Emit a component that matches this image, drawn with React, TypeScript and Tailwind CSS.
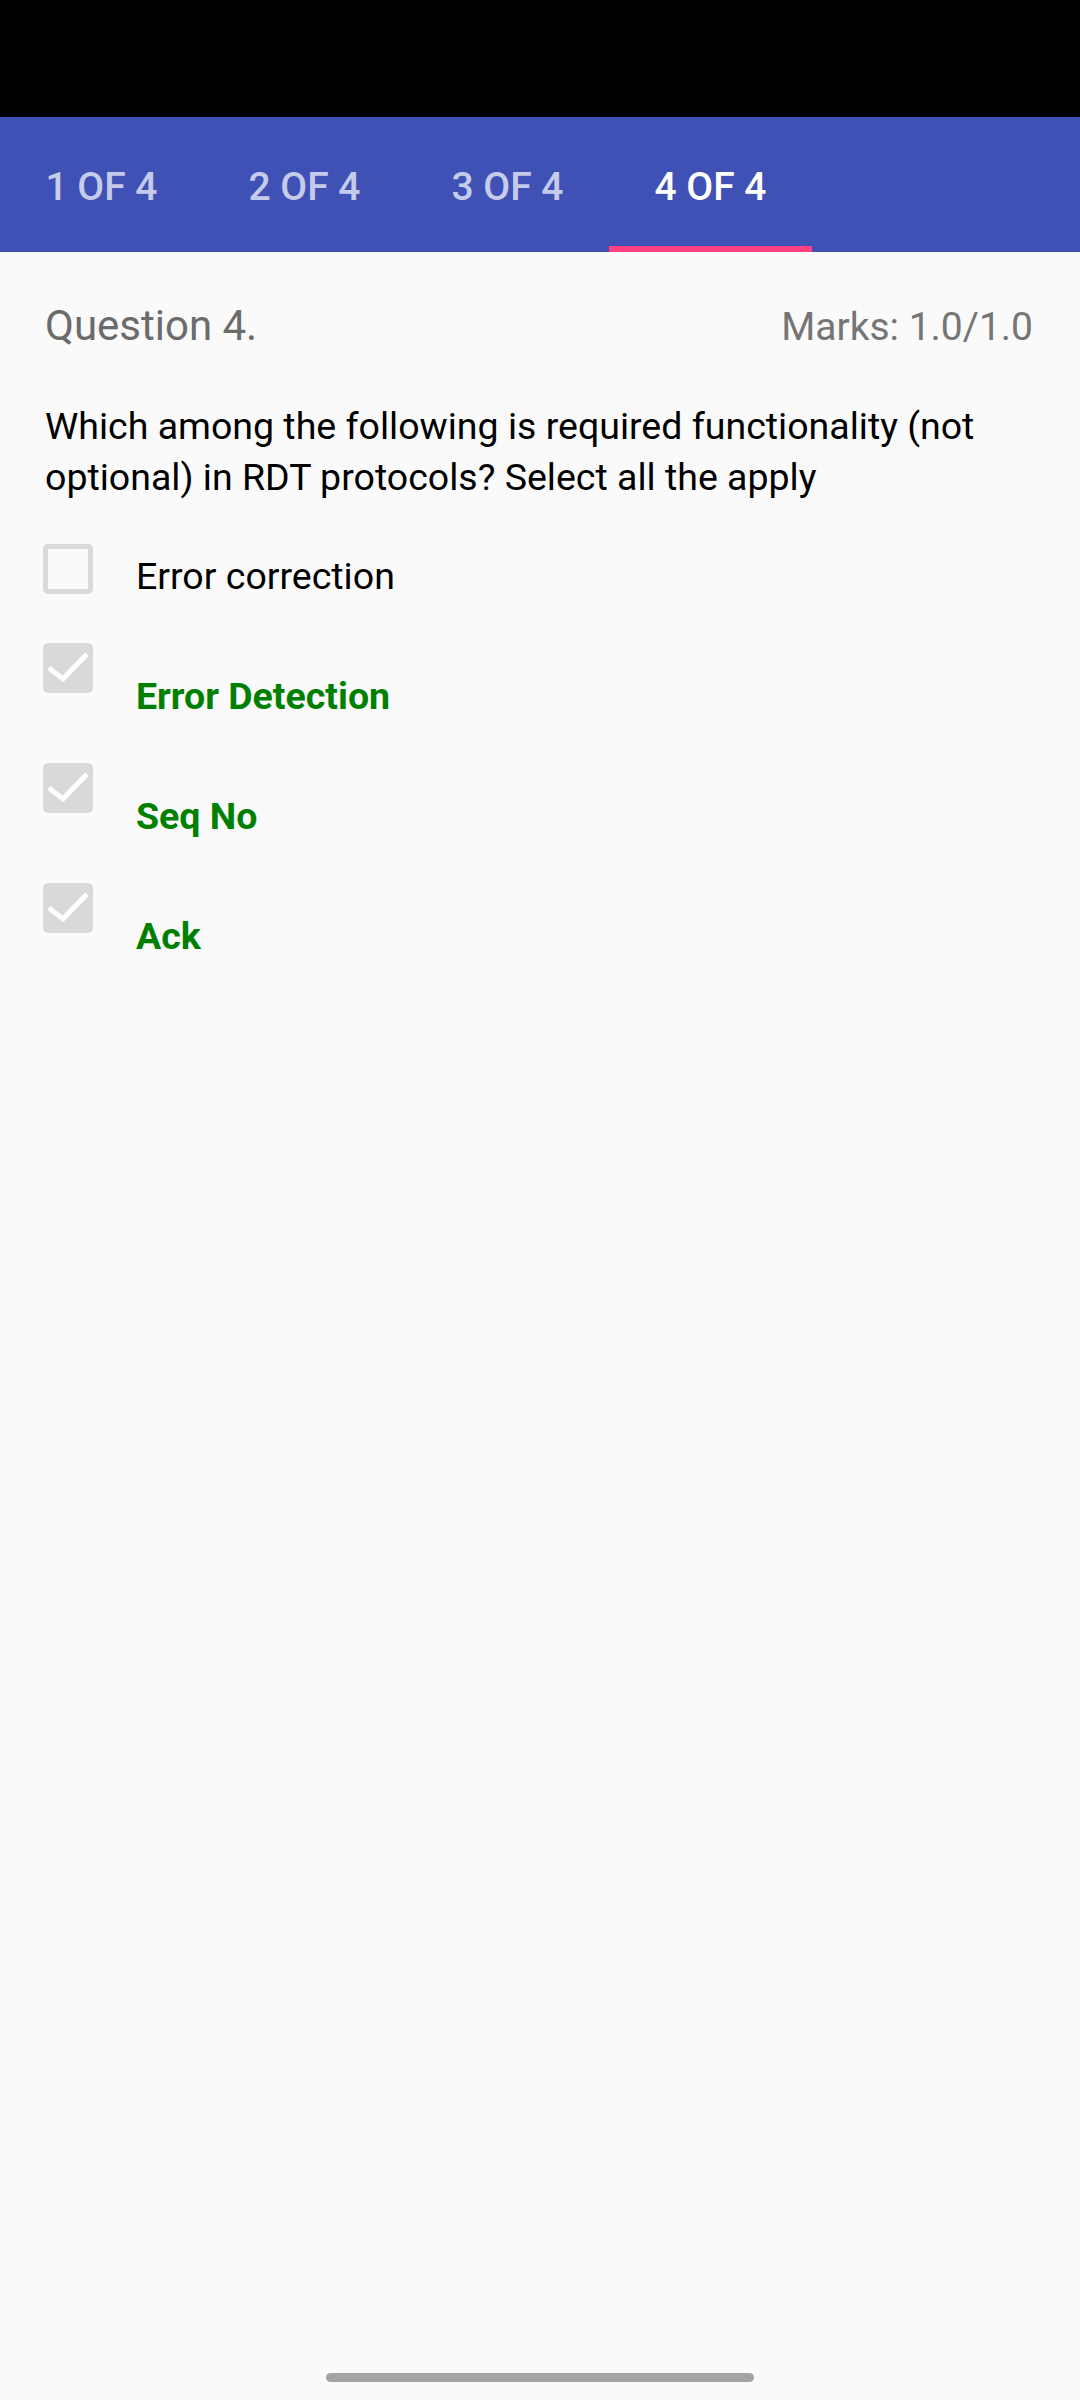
import React from 'react'

const tabs = ['1 OF 4', '2 OF 4', '3 OF 4', '4 OF 4']

const options = [
  { label: 'Error correction', checked: false },
  { label: 'Error Detection', checked: true },
  { label: 'Seq No', checked: true },
  { label: 'Ack', checked: true },
]

const CheckBox: React.FC<{ checked: boolean }> = ({ checked }) => {
  if (!checked) {
    return <div className="w-[50px] h-[50px] shrink-0 rounded-[5px] border-[5px] border-[#d9d9d9]" />
  }
  return (
    <div className="w-[50px] h-[50px] shrink-0 rounded-[5px] bg-[#d9d9d9]">
      <svg width="50" height="50" viewBox="0 0 50 50" fill="none">
        <polyline
          points="6,25 20,36 44,11"
          stroke="#ffffff"
          strokeWidth="5"
          strokeLinecap="butt"
          strokeLinejoin="miter"
        />
      </svg>
    </div>
  )
}

export default function App() {
  return (
    <div className="w-[1080px] h-[2400px] flex flex-col bg-[#fafafa] font-['Roboto',sans-serif]">
      {/* status bar */}
      <div className="h-[117px] bg-black shrink-0" />

      {/* tabs */}
      <div className="h-[135px] bg-[#3f51b5] flex shrink-0">
        {tabs.map((t, i) => {
          const active = i === 3
          return (
            <div key={t} className="relative w-[203px] flex items-center justify-center pt-[6px]">
              <span
                className={`text-[39px] font-medium ${active ? 'text-white' : 'text-[#c5cbe9]'}`}
              >
                {t}
              </span>
              {active && <div className="absolute bottom-0 left-0 right-0 h-[6px] bg-[#ff4081]" />}
            </div>
          )
        })}
      </div>

      {/* content */}
      <div className="flex-1 px-[45px] pt-[48px]">
        <div className="flex items-baseline justify-between">
          <span className="text-[42px] leading-[52px] text-[#6b6b6b]">Question 4.</span>
          <span className="text-[39px] leading-[52px] text-[#757575] mr-[2px]">Marks: 1.0/1.0</span>
        </div>

        <p className="mt-[48px] text-[37.5px] leading-[51px] text-black">
          Which among the following is required functionality (not optional) in RDT protocols? Select all the apply
        </p>

        <div className="mt-[41px] flex flex-col gap-[43px]">
          {options.map((o) => (
            <div key={o.label} className="flex items-start -ml-[2px]">
              <CheckBox checked={o.checked} />
              <span
                className={`ml-[43px] text-[37.5px] leading-[48px] ${
                  o.checked ? 'pt-[29px] font-bold text-[#008000]' : 'pt-[8px] text-black'
                }`}
              >
                {o.label}
              </span>
            </div>
          ))}
        </div>
      </div>

      {/* gesture bar */}
      <div className="flex justify-center pb-[18px] shrink-0">
        <div className="w-[428px] h-[9px] rounded-full bg-[#a4a4a4]" />
      </div>
    </div>
  )
}
